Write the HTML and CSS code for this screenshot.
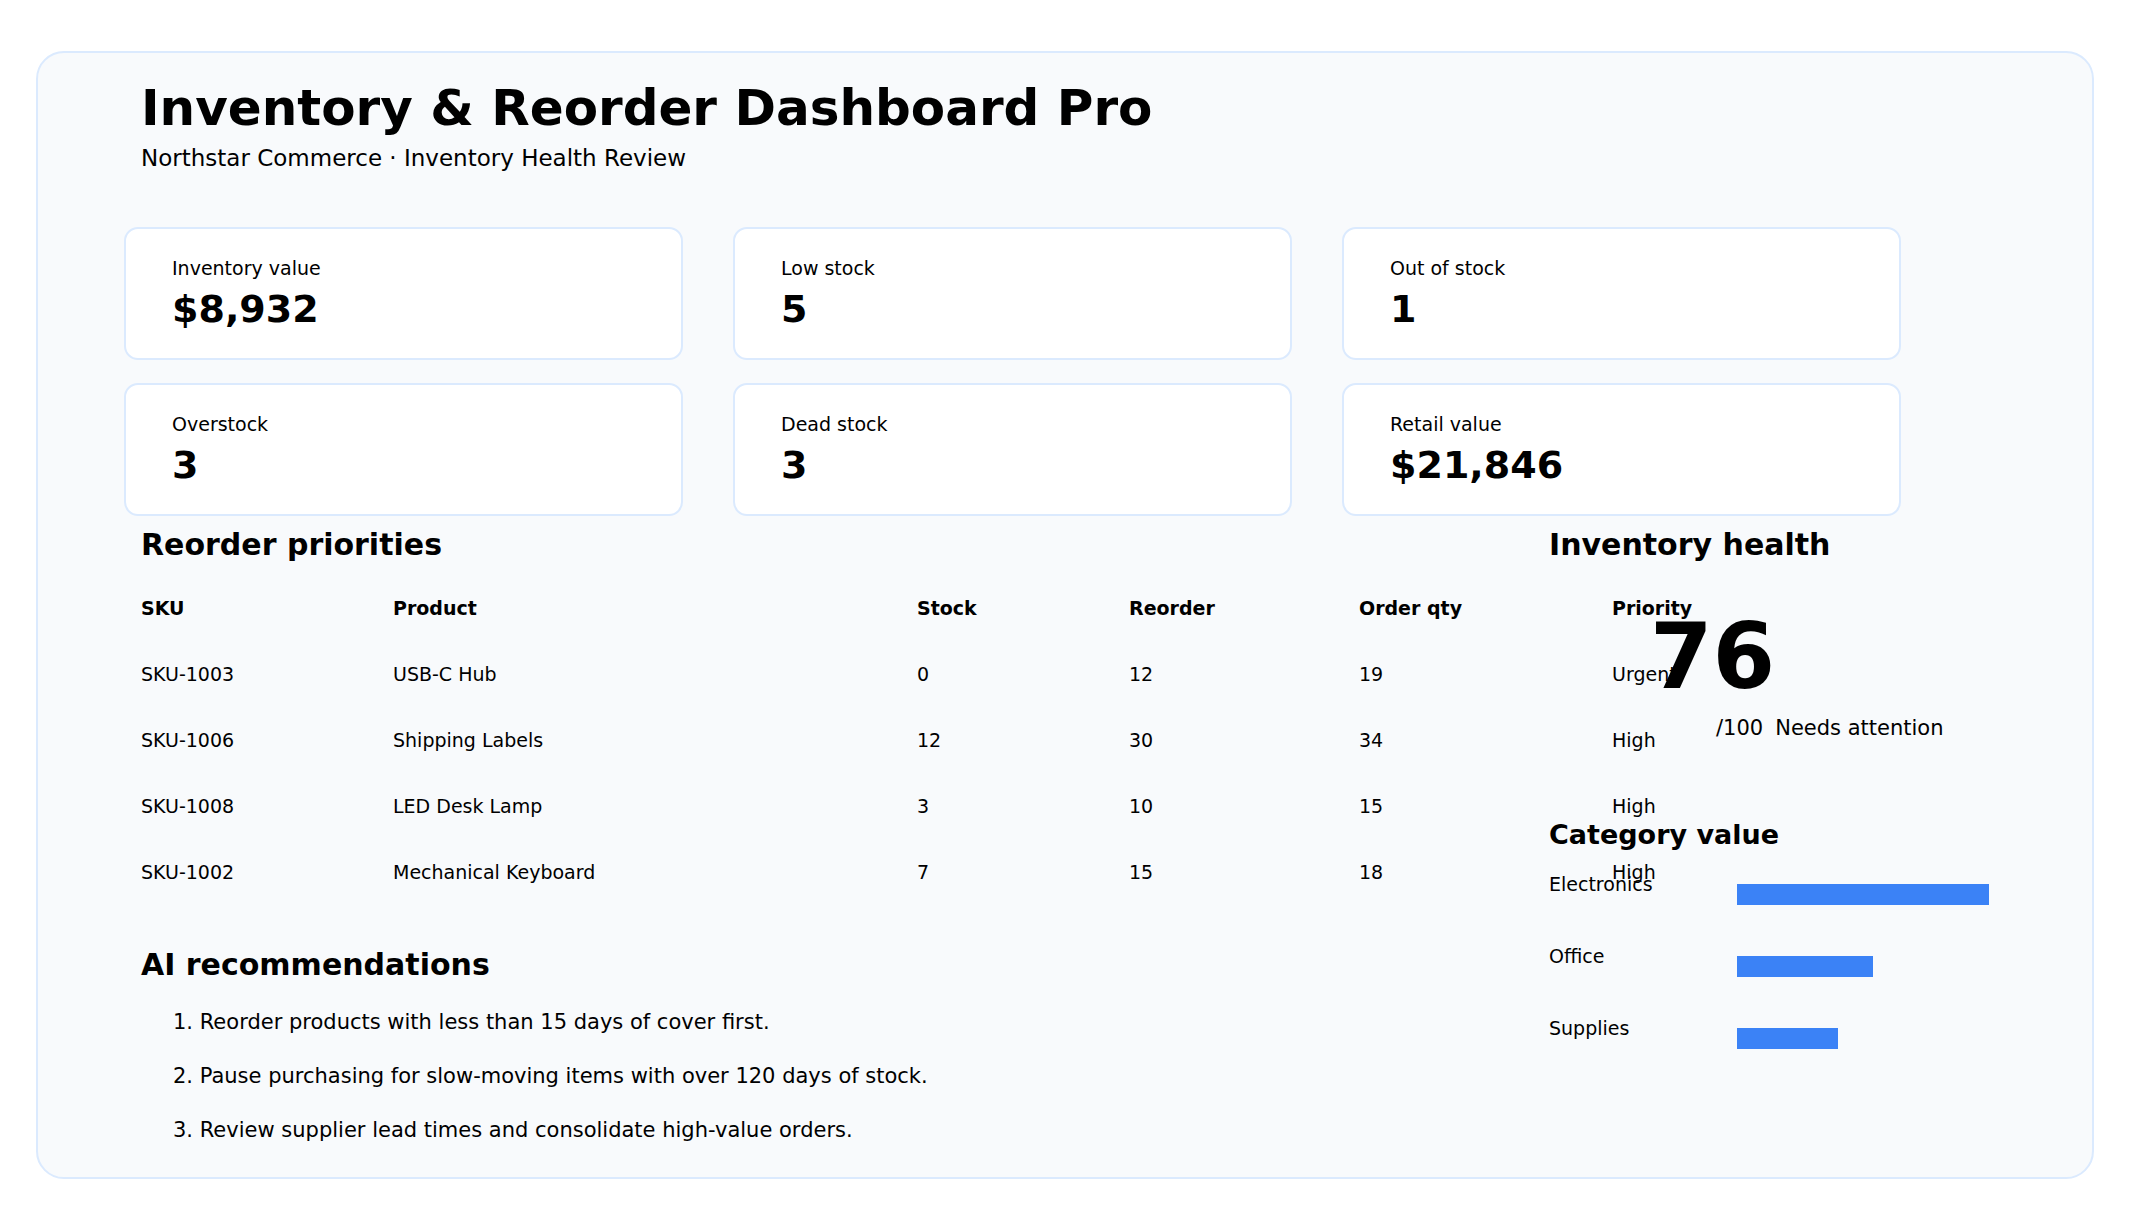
FILE: index.html
```html
<!DOCTYPE html>
<html>
<head>
<title>Inventory &amp; Reorder Dashboard Pro</title>
<link rel="stylesheet" href="styles.css">
</head>
<body>
  <div class="dashboard">
    <div class="header">
      <h1>Inventory &amp; Reorder Dashboard Pro</h1>
      <div class="subtitle">Northstar Commerce · Inventory Health Review</div>
    </div>

    <div class="cards">
      <div class="card">
        <div class="card-label">Inventory value</div>
        <div class="card-value">$8,932</div>
      </div>
      <div class="card">
        <div class="card-label">Low stock</div>
        <div class="card-value">5</div>
      </div>
      <div class="card">
        <div class="card-label">Out of stock</div>
        <div class="card-value">1</div>
      </div>
      <div class="card">
        <div class="card-label">Overstock</div>
        <div class="card-value">3</div>
      </div>
      <div class="card">
        <div class="card-label">Dead stock</div>
        <div class="card-value">3</div>
      </div>
      <div class="card">
        <div class="card-label">Retail value</div>
        <div class="card-value">$21,846</div>
      </div>
    </div>

    <div class="main">
      <div class="left-col">
        <h2>Reorder priorities</h2>
        <table class="reorder-table">
          <colgroup>
            <col class="col-sku">
            <col class="col-product">
            <col class="col-stock">
            <col class="col-reorder">
            <col class="col-qty">
            <col class="col-priority">
          </colgroup>
          <thead>
            <tr>
              <th>SKU</th>
              <th>Product</th>
              <th>Stock</th>
              <th>Reorder</th>
              <th>Order qty</th>
              <th>Priority</th>
            </tr>
          </thead>
          <tbody>
            <tr>
              <td>SKU-1003</td>
              <td>USB-C Hub</td>
              <td>0</td>
              <td>12</td>
              <td>19</td>
              <td>Urgent</td>
            </tr>
            <tr>
              <td>SKU-1006</td>
              <td>Shipping Labels</td>
              <td>12</td>
              <td>30</td>
              <td>34</td>
              <td>High</td>
            </tr>
            <tr>
              <td>SKU-1008</td>
              <td>LED Desk Lamp</td>
              <td>3</td>
              <td>10</td>
              <td>15</td>
              <td>High</td>
            </tr>
            <tr>
              <td>SKU-1002</td>
              <td>Mechanical Keyboard</td>
              <td>7</td>
              <td>15</td>
              <td>18</td>
              <td>High</td>
            </tr>
          </tbody>
        </table>

        <h2 class="ai-title">AI recommendations</h2>
        <ol class="ai-list">
          <li>Reorder products with less than 15 days of cover first.</li>
          <li>Pause purchasing for slow-moving items with over 120 days of stock.</li>
          <li>Review supplier lead times and consolidate high-value orders.</li>
        </ol>
      </div>

      <div class="right-col">
        <h2>Inventory health</h2>
        <div class="score">
          <div class="score-value">76</div>
          <div class="score-meta">
            <span>/100</span>
            <span>Needs attention</span>
          </div>
        </div>

        <h3>Category value</h3>
        <div class="cat-list">
          <div class="cat-row">
            <span>Electronics</span>
            <div class="cat-track"><div class="cat-bar" style="width: 100%"></div></div>
          </div>
          <div class="cat-row">
            <span>Office</span>
            <div class="cat-track"><div class="cat-bar" style="width: 54%"></div></div>
          </div>
          <div class="cat-row">
            <span>Supplies</span>
            <div class="cat-track"><div class="cat-bar" style="width: 40%"></div></div>
          </div>
        </div>
      </div>
    </div>
  </div>
</body>
</html>
```

FILE: styles.css
```css
body {
  font-family: "DejaVu Sans", sans-serif;
  background-color: #fff;
  color: #000;
  margin: 0;
  padding: 0;
}

.dashboard {
  margin: 51px 36px;
  padding: 26px 86px 5px;
  background-color: #f8fafc;
  border: 2px solid #dbeafe;
  border-radius: 28px;
}

.header {
  padding: 0 17px;
}

h1 {
  font-size: 50px;
  margin: 0;
}

.subtitle {
  font-size: 23px;
  margin-top: 8px;
}

/* summary cards */
.cards {
  display: grid;
  grid-template-columns: repeat(3, 559px);
  gap: 23px 50px;
  margin-top: 56px;
}

.card {
  background-color: #fff;
  border: 2px solid #dbeafe;
  border-radius: 14px;
  padding: 28px 46px 27px;
}

.card-label {
  font-size: 19px;
  margin-bottom: 8px;
}

.card-value {
  font-size: 38px;
  font-weight: bold;
}

/* lower area */
.main {
  display: grid;
  grid-template-columns: minmax(0, 1fr) 440px;
  gap: 46px;
  margin-top: 11px;
  padding: 0 17px;
}

h2 {
  font-size: 30px;
  margin: 0;
}

h3 {
  font-size: 27px;
  margin: 79px 0 0;
}

.reorder-table {
  table-layout: fixed;
  border-collapse: collapse;
  width: 1671px;
  margin-top: 13px;
  font-size: 19px;
}

.reorder-table th,
.reorder-table td {
  text-align: left;
  padding: 22px 0;
  white-space: nowrap;
}

.col-sku { width: 252px; }
.col-product { width: 524px; }
.col-stock { width: 212px; }
.col-reorder { width: 230px; }
.col-qty { width: 253px; }
.col-priority { width: 200px; }

.ai-title {
  margin-top: 42px;
}

.ai-list {
  list-style-position: inside;
  margin: 28px 0 0;
  padding-left: 32px;
  font-size: 21px;
}

.ai-list li {
  margin-bottom: 30px;
}

.score {
  margin-top: 50px;
}

.score-value {
  font-size: 90px;
  font-weight: bold;
  line-height: 1;
  margin-left: 101px;
}

.score-meta {
  display: flex;
  gap: 12px;
  margin: 14px 0 0 167px;
  font-size: 21px;
}

.cat-list {
  display: flex;
  flex-direction: column;
  gap: 40px;
  margin-top: 23px;
}

.cat-row {
  display: grid;
  grid-template-columns: 188px 1fr;
  align-items: start;
  font-size: 19px;
}

.cat-track {
  height: 21px;
  margin-top: 11px;
}

.cat-bar {
  height: 100%;
  background-color: #3b82f6;
}
```
